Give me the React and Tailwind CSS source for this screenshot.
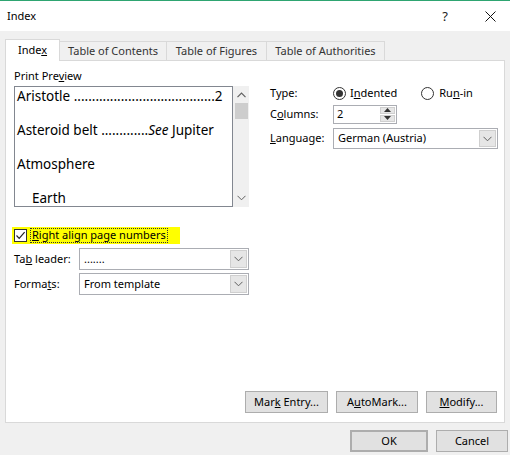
import React from "react";

const F = "font-['Noto_Sans','Open_Sans',sans-serif]";

function ChevronDown({ className = "" }) {
  return (
    <svg width="9" height="6" viewBox="0 0 9 6" className={className}>
      <path d="M0.5 0.8 L4.5 4.8 L8.5 0.8" fill="none" stroke="#606060" strokeWidth="1" />
    </svg>
  );
}
function ChevronUp({ className = "" }) {
  return (
    <svg width="9" height="6" viewBox="0 0 9 6" className={className}>
      <path d="M0.5 5.2 L4.5 1.2 L8.5 5.2" fill="none" stroke="#606060" strokeWidth="1.2" />
    </svg>
  );
}

function Select({ value, className = "" }) {
  return (
    <div className={"flex items-stretch bg-white border border-[#abadb3] " + className}>
      <div className="flex-1 flex items-center pl-[4px] text-black">{value}</div>
      <div className="w-[17px] m-[1px] bg-[#e6e6e6] border border-[#cfcfcf] flex items-center justify-center">
        <ChevronDown />
      </div>
    </div>
  );
}

function Btn({ children, className = "" }) {
  return (
    <div className={"h-[22px] flex items-center justify-center bg-[#e1e1e1] border border-[#adadad] text-black " + className}>
      <span className="whitespace-pre">{children}</span>
    </div>
  );
}

export default function App() {
  return (
    <div className={"w-[510px] h-[455px] bg-[#f0f0f0] flex flex-col text-[11px] text-black " + F}>
      <div className="h-[1px] bg-[#2ea571]" />
      {/* title bar */}
      <div className="h-[30px] bg-white flex items-center pl-[7px] pr-[14px]">
        <span className="text-[11px]">Index</span>
        <div className="flex-1" />
        <span className="text-[13px] leading-none mr-[37px] text-[#222]">?</span>
        <svg width="11" height="11" viewBox="0 0 11 11">
          <path d="M0.5 0.5 L10.5 10.5 M10.5 0.5 L0.5 10.5" stroke="#111" strokeWidth="1" />
        </svg>
      </div>
      {/* tabs */}
      <div className="pt-[8px] px-[5px] flex items-end h-[29px]">
        <div className="w-[55px] h-[22px] bg-white border border-b-0 border-[#d9d9d9] flex items-center justify-center relative top-[1px] z-10">
          <span>Inde<u>x</u></span>
        </div>
        <div className="w-[107px] h-[19px] border border-b-0 border-l-0 border-[#d9d9d9] flex items-center justify-center text-[#333]">
          Table of Contents
        </div>
        <div className="w-[100px] h-[19px] border border-b-0 border-l-0 border-[#d9d9d9] flex items-center justify-center text-[#333]">
          Table of Figures
        </div>
        <div className="w-[118px] h-[19px] border border-b-0 border-l-0 border-[#d9d9d9] flex items-center justify-center text-[#333]">
          Table of Authorities
        </div>
      </div>
      {/* pane */}
      <div className="mx-[5px] h-[363px] bg-white border border-[#d9d9d9] flex flex-col pt-[8px] pl-[8px] pr-[7px] pb-[9px]">
        <div className="flex">
          {/* left column */}
          <div className="w-[235px] flex flex-col">
            <div className="h-[14px] leading-[14px]">Print Pre<u>v</u>iew</div>
            <div className="mt-[3px] flex h-[121px]">
              <div className="w-[219px] border border-[#828790] flex flex-col pt-[1px] pl-[2px] pr-[9px] gap-[18px] text-[13.5px] overflow-hidden">
                <div className="h-[16px] leading-[16px] whitespace-nowrap">
                  Aristotle .......................................2
                </div>
                <div className="h-[16px] leading-[16px] whitespace-nowrap">
                  Asteroid belt .............<i>See</i> Jupiter
                </div>
                <div className="h-[16px] leading-[16px] whitespace-nowrap">Atmosphere</div>
                <div className="h-[16px] leading-[16px] whitespace-nowrap pl-[15px]">Earth</div>
              </div>
              <div className="w-[16px] bg-[#f0f0f0] flex flex-col items-center border-y border-[#f0f0f0]">
                <div className="h-[16px] flex items-center justify-center"><ChevronUp /></div>
                <div className="w-[13px] h-[16px] bg-[#cdcdcd]" />
                <div className="flex-1" />
                <div className="h-[16px] flex items-center justify-center"><ChevronDown /></div>
              </div>
            </div>
            {/* checkbox */}
            <div className="mt-[20px] flex">
              <div className="w-[168px] h-[17px] bg-[#ffff00] flex items-center pl-[2px] ml-[-2px]">
                <div className="w-[13px] h-[13px] border border-[#333] bg-white flex items-center justify-center">
                  <svg width="11" height="11" viewBox="0 0 11 11">
                    <path d="M1.5 5.5 L4.2 8.3 L9.6 2.2" fill="none" stroke="#222" strokeWidth="1.2" />
                  </svg>
                </div>
                <div className="ml-[3px] px-[1px] h-[15px] flex items-center border border-dotted border-[#333]">
                  <span><u>R</u>ight align page numbers</span>
                </div>
              </div>
            </div>
            <div className="mt-[4px] flex items-center">
              <div className="w-[65px]">Ta<u>b</u> leader:</div>
              <Select value="......." className="flex-1 h-[22px]" />
            </div>
            <div className="mt-[3px] flex items-center">
              <div className="w-[65px]">Forma<u>t</u>s:</div>
              <Select value="From template" className="flex-1 h-[22px]" />
            </div>
          </div>
          {/* right column */}
          <div className="ml-[21px] w-[228px] flex flex-col">
            <div className="mt-[16px] h-[16px] flex items-center">
              <div className="w-[63px]">Type:</div>
              <div className="w-[13px] h-[13px] rounded-full border border-[#333] flex items-center justify-center">
                <div className="w-[7px] h-[7px] rounded-full bg-[#333]" />
              </div>
              <span className="ml-[4px]">I<u>n</u>dented</span>
              <div className="ml-[24px] w-[13px] h-[13px] rounded-full border border-[#333]" />
              <span className="ml-[5px]">Ru<u>n</u>-in</span>
            </div>
            <div className="mt-[3px] h-[20px] flex items-center">
              <div className="w-[63px]">C<u>o</u>lumns:</div>
              <div className="w-[64px] h-[19px] border border-[#abadb3] flex">
                <div className="flex-1 pl-[3px] flex items-center">2</div>
                <div className="w-[15px] flex flex-col m-[1px] gap-[1px]">
                  <div className="flex-1 bg-[#e6e6e6] border border-[#cfcfcf] flex items-center justify-center">
                    <svg width="7" height="4" viewBox="0 0 7 4"><path d="M0 4 L3.5 0 L7 4 Z" fill="#333" /></svg>
                  </div>
                  <div className="flex-1 bg-[#e6e6e6] border border-[#cfcfcf] flex items-center justify-center">
                    <svg width="7" height="4" viewBox="0 0 7 4"><path d="M0 0 L3.5 4 L7 0 Z" fill="#333" /></svg>
                  </div>
                </div>
              </div>
            </div>
            <div className="mt-[4px] flex items-center">
              <div className="w-[63px]"><u>L</u>anguage:</div>
              <Select value="German (Austria)" className="w-[165px] h-[21px]" />
            </div>
          </div>
        </div>
        <div className="flex-1" />
        <div className="flex justify-end">
          <Btn className="w-[83px]">Mar<u>k</u> Entry...</Btn>
          <Btn className="w-[82px] ml-[8px]">A<u>u</u>toMark...</Btn>
          <Btn className="w-[71px] ml-[8px]"><u>M</u>odify...</Btn>
        </div>
      </div>
      {/* bottom */}
      <div className="mt-[7px] flex justify-end pr-[2px]">
        <Btn className="w-[78px] border-2 border-[#0078d7]">OK</Btn>
        <Btn className="w-[72px] ml-[8px]">Cancel</Btn>
      </div>
    </div>
  );
}
